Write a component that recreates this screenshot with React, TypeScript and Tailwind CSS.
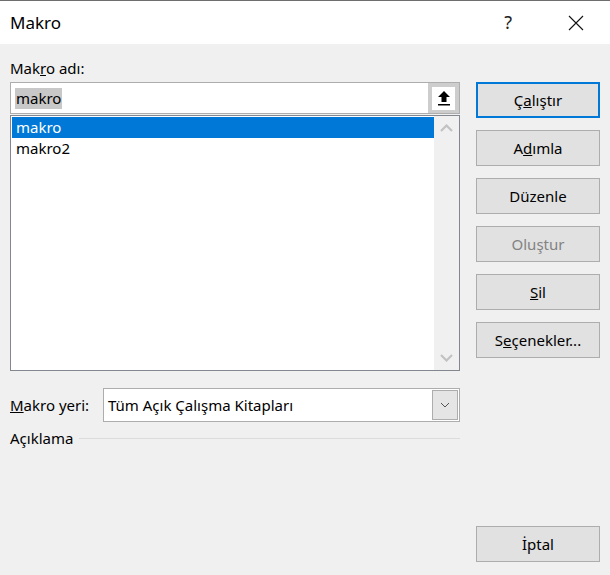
import React from 'react';

const font = { fontFamily: '"Noto Sans", "Liberation Sans", sans-serif' };

function DialogButton({
  children,
  isDefault,
  disabled,
}: {
  children: React.ReactNode;
  isDefault?: boolean;
  disabled?: boolean;
}) {
  return (
    <div
      className={`h-[36px] w-[124px] flex items-center justify-center bg-[#e1e1e1] text-[15px] ${
        isDefault ? 'border-2 border-[#0078d7]' : 'border border-[#adadad]'
      } ${disabled ? 'text-[#838383]' : 'text-black'}`}
    >
      {children}
    </div>
  );
}

function Chevron({ up, color }: { up?: boolean; color: string }) {
  return (
    <svg width="13" height="8" viewBox="0 0 13 8">
      <path
        d={up ? 'M1 7 L6.5 1.5 L12 7' : 'M1 1 L6.5 6.5 L12 1'}
        fill="none"
        stroke={color}
        strokeWidth="2.2"
      />
    </svg>
  );
}

export default function App() {
  return (
    <div className="w-[610px] h-[575px] flex flex-col bg-[#f0f0f0] overflow-hidden" style={font}>
      {/* title bar */}
      <div className="h-[44px] bg-white border-t border-[#6e6e6e] flex items-center">
        <span className="pl-[10px] text-[17px] text-black">Makro</span>
        <span className="ml-auto text-[18px] text-[#222] mr-[56px]">?</span>
        <svg width="16" height="16" viewBox="0 0 16 16" className="mr-[26px]">
          <path d="M1 1 L15 15 M15 1 L1 15" stroke="#111" strokeWidth="1.1" />
        </svg>
      </div>

      <div className="flex-1 flex">
        {/* left column */}
        <div className="w-[450px] ml-[10px] pt-[14px] flex flex-col">
          <div className="h-[20px] leading-[20px] text-[15px] text-black mb-[4px]">
            Mak<span className="underline">r</span>o adı:
          </div>

          <div className="h-[32px] flex border border-[#adadad] bg-white">
            <div className="flex-1 flex items-center pl-[4px]">
              <span className="bg-[#c8c8c8] text-[15px] leading-[21px] text-black px-[1px]">makro</span>
            </div>
            <div className="w-[31px] bg-[#cdcdcd] flex items-center justify-center">
              <div className="w-[23px] h-[23px] bg-white flex items-center justify-center">
                <svg width="14" height="16" viewBox="0 0 14 16">
                  <path d="M7 1 L13 7 L9.5 7 L9.5 12 L4.5 12 L4.5 7 L1 7 Z" fill="#000" />
                  <rect x="1" y="14" width="12" height="1.5" fill="#000" />
                </svg>
              </div>
            </div>
          </div>

          <div className="h-[256px] mt-[1px] flex border border-[#828790] bg-white">
            <div className="flex-1 pt-[1px] pl-[1px]">
              <div className="h-[21px] bg-[#0078d7] text-white text-[15px] leading-[21px] pl-[4px]">makro</div>
              <div className="h-[21px] text-black text-[15px] leading-[21px] pl-[4px]">makro2</div>
            </div>
            <div className="w-[25px] bg-[#f0f0f0] flex flex-col items-center justify-between py-[8px]">
              <Chevron up color="#c2c2c2" />
              <Chevron color="#c2c2c2" />
            </div>
          </div>

          <div className="mt-[17px] h-[34px] flex items-center">
            <div className="w-[93px] text-[15px] text-black">
              <span className="underline">M</span>akro yeri:
            </div>
            <div className="flex-1 h-[34px] flex border border-[#adadad] bg-white">
              <div className="flex-1 flex items-center pl-[4px] text-[15px] text-black">
                Tüm Açık Çalışma Kitapları
              </div>
              <div className="w-[26px] my-[1px] mr-[1px] bg-[#e5e5e5] border border-[#adadad] flex items-center justify-center">
                <svg width="10" height="6" viewBox="0 0 10 6">
                  <path d="M1 1 L5 5 L9 1" fill="none" stroke="#555" strokeWidth="1" />
                </svg>
              </div>
            </div>
          </div>

          <div className="mt-[5px] flex items-center">
            <span className="text-[15px] text-black">Açıklama</span>
            <div className="flex-1 h-px bg-[#dcdcdc] ml-[6px]" />
          </div>
        </div>

        {/* right column */}
        <div className="ml-[16px] pt-[38px] pb-[13px] flex flex-col gap-[12px]">
          <DialogButton isDefault>
            <span>
              Ç<span className="underline">a</span>lıştır
            </span>
          </DialogButton>
          <DialogButton>
            <span>
              A<span className="underline">d</span>ımla
            </span>
          </DialogButton>
          <DialogButton>Düzenle</DialogButton>
          <DialogButton disabled>Oluştur</DialogButton>
          <DialogButton>
            <span>
              <span className="underline">S</span>il
            </span>
          </DialogButton>
          <DialogButton>
            <span>
              S<span className="underline">e</span>çenekler...
            </span>
          </DialogButton>
          <div className="mt-auto">
            <DialogButton>İptal</DialogButton>
          </div>
        </div>
      </div>
    </div>
  );
}
